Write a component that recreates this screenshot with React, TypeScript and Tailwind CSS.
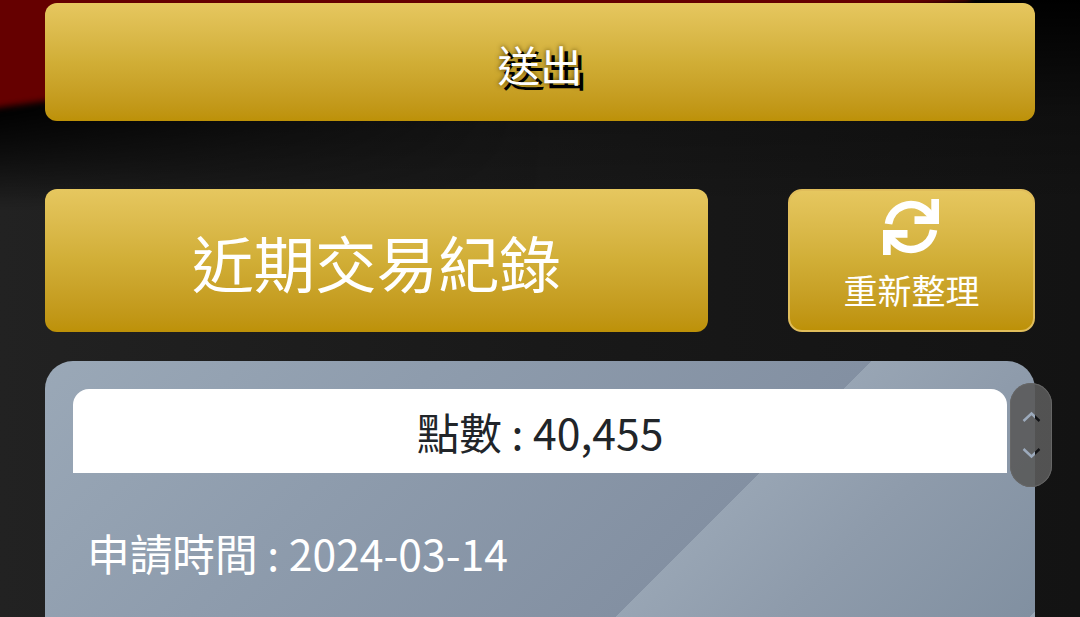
const RefreshIcon = () => (
  <svg className="mr-0.5 size-14" viewBox="0 0 56 56" fill="none">
    <path
      d="M5.5 25A22.8 22.8 0 0 1 43 11.2Q47 14.5 50 19"
      stroke="white"
      strokeWidth="7.6"
    />
    <path d="M48.3 0H56V25H31.5V17.3H48.3Z" fill="white" />
    <path
      d="M50.5 31A22.8 22.8 0 0 1 13 44.8Q9 41.5 6 37"
      stroke="white"
      strokeWidth="7.6"
    />
    <path d="M7.7 56H0V31H24.5V38.7H7.7Z" fill="white" />
  </svg>
);

const PageBackground = () => (
  <svg className="absolute inset-0 size-full" viewBox="0 0 1080 617">
    <defs>
      <linearGradient id="dark" x1="0" y1="0" x2="1" y2="0">
        <stop offset="0" stopColor="#222222" />
        <stop offset="0.5" stopColor="#191919" />
        <stop offset="1" stopColor="#131313" />
      </linearGradient>
      <linearGradient id="shade" x1="0" y1="0" x2="0" y2="1">
        <stop offset="0" stopColor="#000" />
        <stop offset="0.18" stopColor="#000" stopOpacity="0.95" />
        <stop offset="0.24" stopColor="#000" stopOpacity="0.6" />
        <stop offset="0.34" stopColor="#000" stopOpacity="0" />
      </linearGradient>
      <linearGradient id="shadeRight" x1="0" y1="0" x2="0" y2="1">
        <stop offset="0" stopColor="#000" />
        <stop offset="0.18" stopColor="#000" stopOpacity="0.25" />
        <stop offset="0.33" stopColor="#000" stopOpacity="0" />
      </linearGradient>
      <linearGradient id="fade" x1="0" y1="0" x2="1" y2="0">
        <stop offset="0" stopColor="#fff" />
        <stop offset="0.5" stopColor="#000" />
      </linearGradient>
      <mask id="leftOnly">
        <rect width="1080" height="617" fill="url(#fade)" />
      </mask>
      <filter id="soft">
        <feGaussianBlur stdDeviation="3" />
      </filter>
    </defs>
    <rect width="1080" height="617" fill="url(#dark)" />
    <rect width="1080" height="617" fill="url(#shadeRight)" />
    <rect
      width="1080"
      height="617"
      fill="url(#shade)"
      mask="url(#leftOnly)"
    />
    <path
      d="M-20 -20H970V0C700 30 300 70 45 101L-20 110Z"
      fill="#650000"
      filter="url(#soft)"
    />
  </svg>
);

// 箭頭左半在卡片上為淺色，右半為黑色
const ScrollArrows = () => (
  <svg className="size-full" viewBox="0 0 42 104" fill="none">
    <defs>
      <linearGradient
        id="arrow"
        gradientUnits="userSpaceOnUse"
        x1="0"
        y1="0"
        x2="42"
        y2="0"
      >
        <stop offset="0.595" stopColor="#9caabc" />
        <stop offset="0.595" stopColor="#111215" />
      </linearGradient>
    </defs>
    <g stroke="url(#arrow)" strokeWidth="2.4">
      <path d="M13.5 38L21.5 30.5L29.5 38" />
      <path d="M13.5 66L21.5 73.5L29.5 66" />
    </g>
  </svg>
);

const App = () => {
  return (
    <div className="relative h-[617px] w-[1080px] overflow-hidden font-['Noto_Sans_CJK_TC',sans-serif] text-white">
      <PageBackground />

      <div className="relative px-[45px] pt-[3px]">
        <button className="flex h-[118px] w-full items-center justify-center rounded-xl bg-linear-to-b from-[#e6c75f] via-[#d1ae36] to-[#bd9107] pt-1 text-[42.5px] [text-shadow:5px_5px_0_#000,0_0_5px_#4d3b00]">
          送出
        </button>

        <div className="mt-[68px] flex justify-between">
          <div className="flex h-[143px] w-[663px] items-center justify-center rounded-xl bg-linear-to-b from-[#e6c75f] via-[#d1ae36] to-[#bd9107] pt-1 text-[61.5px]">
            近期交易紀錄
          </div>
          <button className="flex h-[143px] w-[247px] flex-col items-center rounded-[14px] border-2 border-[#e0bd5b] bg-linear-to-b from-[#e6c75f] via-[#d1ae36] to-[#bd9107] pt-2 text-[34px] leading-[70px]">
            <RefreshIcon />
            重新整理
          </button>
        </div>

        {/* 交易紀錄卡片 */}
        <div className="mt-[29px] h-[300px] rounded-t-[28px] bg-[linear-gradient(135deg,#9aa8b7_0,#8e9cad_280px,#8390a2_584.5px,#98a5b4_584.5px,#8e9bab_700px,#8190a1_877px,#98a6b5_877px)] px-7 pt-7">
          <div className="flex h-[84px] items-center justify-center rounded-t-2xl bg-white text-[42.7px] text-[#212529]">
            點數 : 40,455
          </div>
          <div className="mt-12 pl-[14px] text-[42.7px] leading-[62px]">
            申請時間 : 2024-03-14
          </div>
        </div>
      </div>

      {/* 捲動按鈕 */}
      <div className="absolute left-[1010px] top-[383px] h-[104px] w-[42px] rounded-full bg-[#5a5a5a]/90 inset-ring inset-ring-[#666]">
        <ScrollArrows />
      </div>
    </div>
  );
};

export default App;
